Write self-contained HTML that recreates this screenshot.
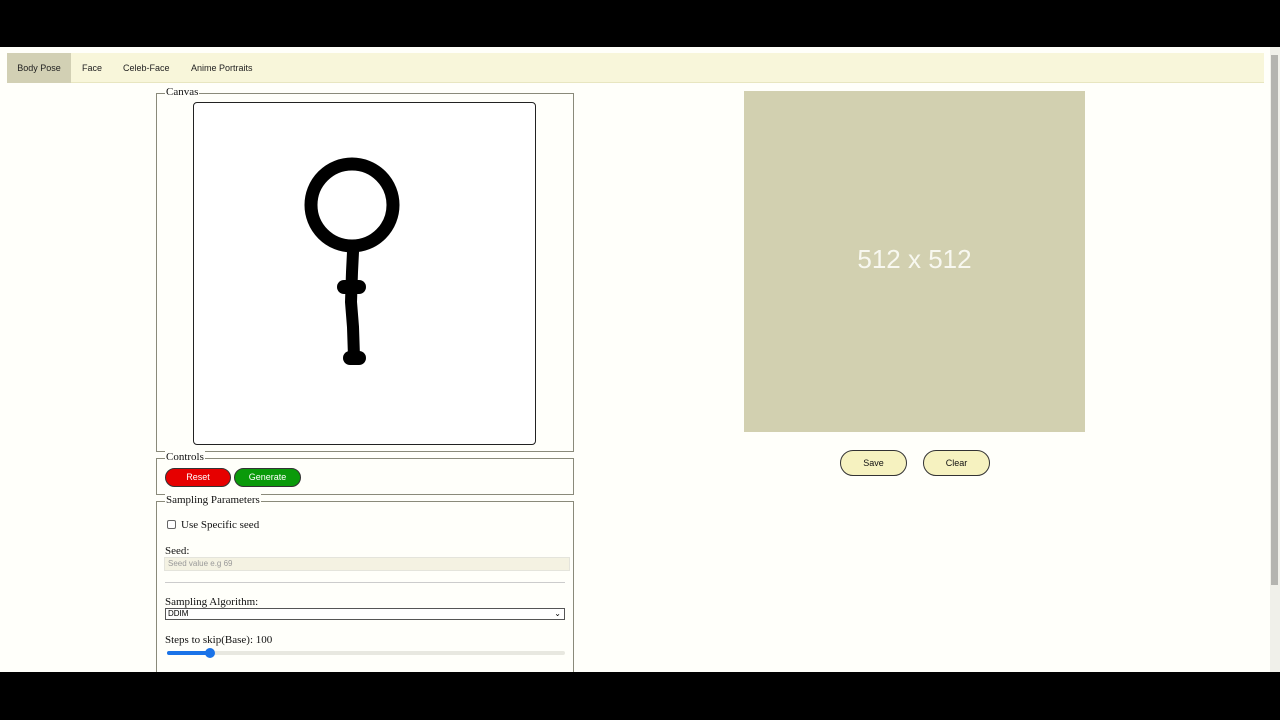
<!DOCTYPE html>
<html><head><style>
*{margin:0;padding:0;box-sizing:border-box}
body{width:1280px;height:720px;background:#000;position:relative;overflow:hidden;font-family:"Liberation Serif",serif}
.a{position:absolute}
.page{left:0;top:47px;width:1280px;height:625px;background:#fffffa}
.nav{left:7px;top:53px;width:1257px;height:30px;background:#f8f6da;border-bottom:1px solid #e8e6c0}
.tab{top:53px;height:30px;font-family:"Liberation Sans",sans-serif;font-size:9px;line-height:30px;color:#222}
.fs{border:1px solid #8a8a7a}
.lg{font-size:11px;background:#fffffa;padding:0 1px;color:#111}
.sans{font-family:"Liberation Sans",sans-serif}
.t{font-size:11px;color:#111}
</style></head><body>
<div class="a page"></div>
<div class="a nav"></div>
<div class="a tab" style="left:7px;width:64px;background:#d2d0b4;text-align:center">Body Pose</div>
<div class="a tab" style="left:82px">Face</div>
<div class="a tab" style="left:123px">Celeb-Face</div>
<div class="a tab" style="left:191px">Anime Portraits</div>
<div class="a" style="left:1270px;top:47px;width:10px;height:625px;background:#f0f0ea"></div>
<div class="a" style="left:1271px;top:55px;width:7px;height:530px;background:#b4b4b0"></div>

<div class="a fs" style="left:156px;top:93px;width:418px;height:359px"></div>
<div class="a lg" style="left:165px;top:86px">Canvas</div>
<div class="a" style="left:193px;top:102px;width:343px;height:343px;border:1px solid #222;border-radius:4px;background:#fff"></div>
<svg class="a" style="left:193px;top:102px" width="343" height="343">
<g stroke="#000" fill="none" stroke-linecap="round" stroke-linejoin="round">
<circle cx="159" cy="103" r="41" stroke-width="13"/>
<path d="M160 150 L159 170 L158 200 L160 225 L161 255" stroke-width="12"/>
<path d="M151 185 L166 185" stroke-width="14"/>
<path d="M157 256 L166 256" stroke-width="14"/>
</g></svg>

<div class="a fs" style="left:156px;top:458px;width:418px;height:37px"></div>
<div class="a lg" style="left:165px;top:451px">Controls</div>
<div class="a sans" style="left:165px;top:468px;width:66px;height:19px;background:#e60000;border:1px solid #333;border-radius:10px;color:#fff;font-size:9px;text-align:center;line-height:17px">Reset</div>
<div class="a sans" style="left:234px;top:468px;width:67px;height:19px;background:#0a9a0a;border:1px solid #333;border-radius:10px;color:#fff;font-size:9px;text-align:center;line-height:17px">Generate</div>

<div class="a fs" style="left:156px;top:501px;width:418px;height:190px"></div>
<div class="a lg" style="left:165px;top:494px">Sampling Parameters</div>
<div class="a" style="left:167px;top:520px;width:9px;height:9px;border:1px solid #666;border-radius:2px;background:#fff"></div>
<div class="a t" style="left:181px;top:519px">Use Specific seed</div>
<div class="a t" style="left:165px;top:545px">Seed:</div>
<div class="a sans" style="left:164px;top:557px;width:406px;height:14px;border:1px solid #e4e4dc;background:#f4f2e2;font-size:8px;color:#999;padding-left:3px;line-height:12px">Seed value e.g 69</div>
<div class="a" style="left:165px;top:582px;width:400px;height:1px;background:#ccc"></div>
<div class="a t" style="left:165px;top:596px">Sampling Algorithm:</div>
<div class="a sans" style="left:165px;top:608px;width:400px;height:12px;border:1px solid #555;background:#fff;font-size:8px;line-height:10px;padding-left:2px">DDIM<span style="position:absolute;right:3px;top:0">&#8964;</span></div>
<div class="a t" style="left:165px;top:634px">Steps to skip(Base): 100</div>
<div class="a" style="left:167px;top:651px;width:398px;height:4px;background:#e8e8e0;border-radius:2px"></div>
<div class="a" style="left:167px;top:651px;width:43px;height:4px;background:#1a73e8;border-radius:2px"></div>
<div class="a" style="left:205px;top:648px;width:10px;height:10px;background:#1a73e8;border-radius:5px"></div>

<div class="a sans" style="left:744px;top:91px;width:341px;height:341px;background:#d2d0b0;color:#f8f8f0;font-size:26px;text-align:center;line-height:336px">512 x 512</div>
<div class="a sans" style="left:840px;top:450px;width:67px;height:26px;background:#f6f2c0;border:1px solid #333;border-radius:13px;font-size:9px;text-align:center;line-height:24px;color:#111">Save</div>
<div class="a sans" style="left:923px;top:450px;width:67px;height:26px;background:#f6f2c0;border:1px solid #333;border-radius:13px;font-size:9px;text-align:center;line-height:24px;color:#111">Clear</div>
<div class="a" style="left:0;top:672px;width:1280px;height:48px;background:#000"></div>
</body></html>
